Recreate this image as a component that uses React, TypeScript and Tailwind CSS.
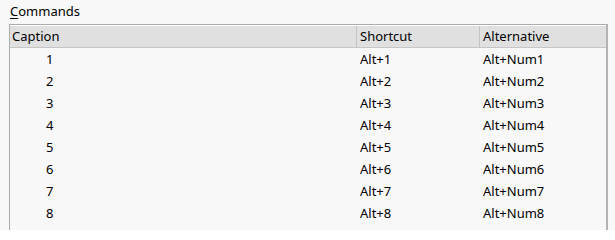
const rows = [1, 2, 3, 4, 5, 6, 7, 8]

export default function App() {
  return (
    <div className="w-[615px] h-[230px] overflow-hidden bg-[#f8f8f8] text-[13px] text-black font-['Noto_Sans',sans-serif]">
      <div className="h-[24px] pl-[10px] pt-[1px] leading-[20px]">
        <span className="underline underline-offset-2">C</span>ommands
      </div>
      <div className="ml-[9px] w-[599px] h-[206px] border-l border-t border-r-2 border-[#acacac] border-r-[#b4b4b4]">
        <div className="flex h-[23px] bg-[#e0e0e0] border-t border-t-white border-b border-b-[#c6c6c6] leading-[21px]">
          <div className="w-[346px] pl-[2px]">Caption</div>
          <div className="w-[123px] pl-[3px] border-l border-[#c3c3c3]">Shortcut</div>
          <div className="flex-1 pl-[3px] border-l border-[#c3c3c3]">Alternative</div>
        </div>
        {rows.map((n) => (
          <div key={n} className="flex h-[22px] leading-[22px]">
            <div className="w-[346px] pl-[36px]">{n}</div>
            <div className="w-[123px] pl-[4px]">Alt+{n}</div>
            <div className="flex-1 pl-[4px]">Alt+Num{n}</div>
          </div>
        ))}
      </div>
    </div>
  )
}
